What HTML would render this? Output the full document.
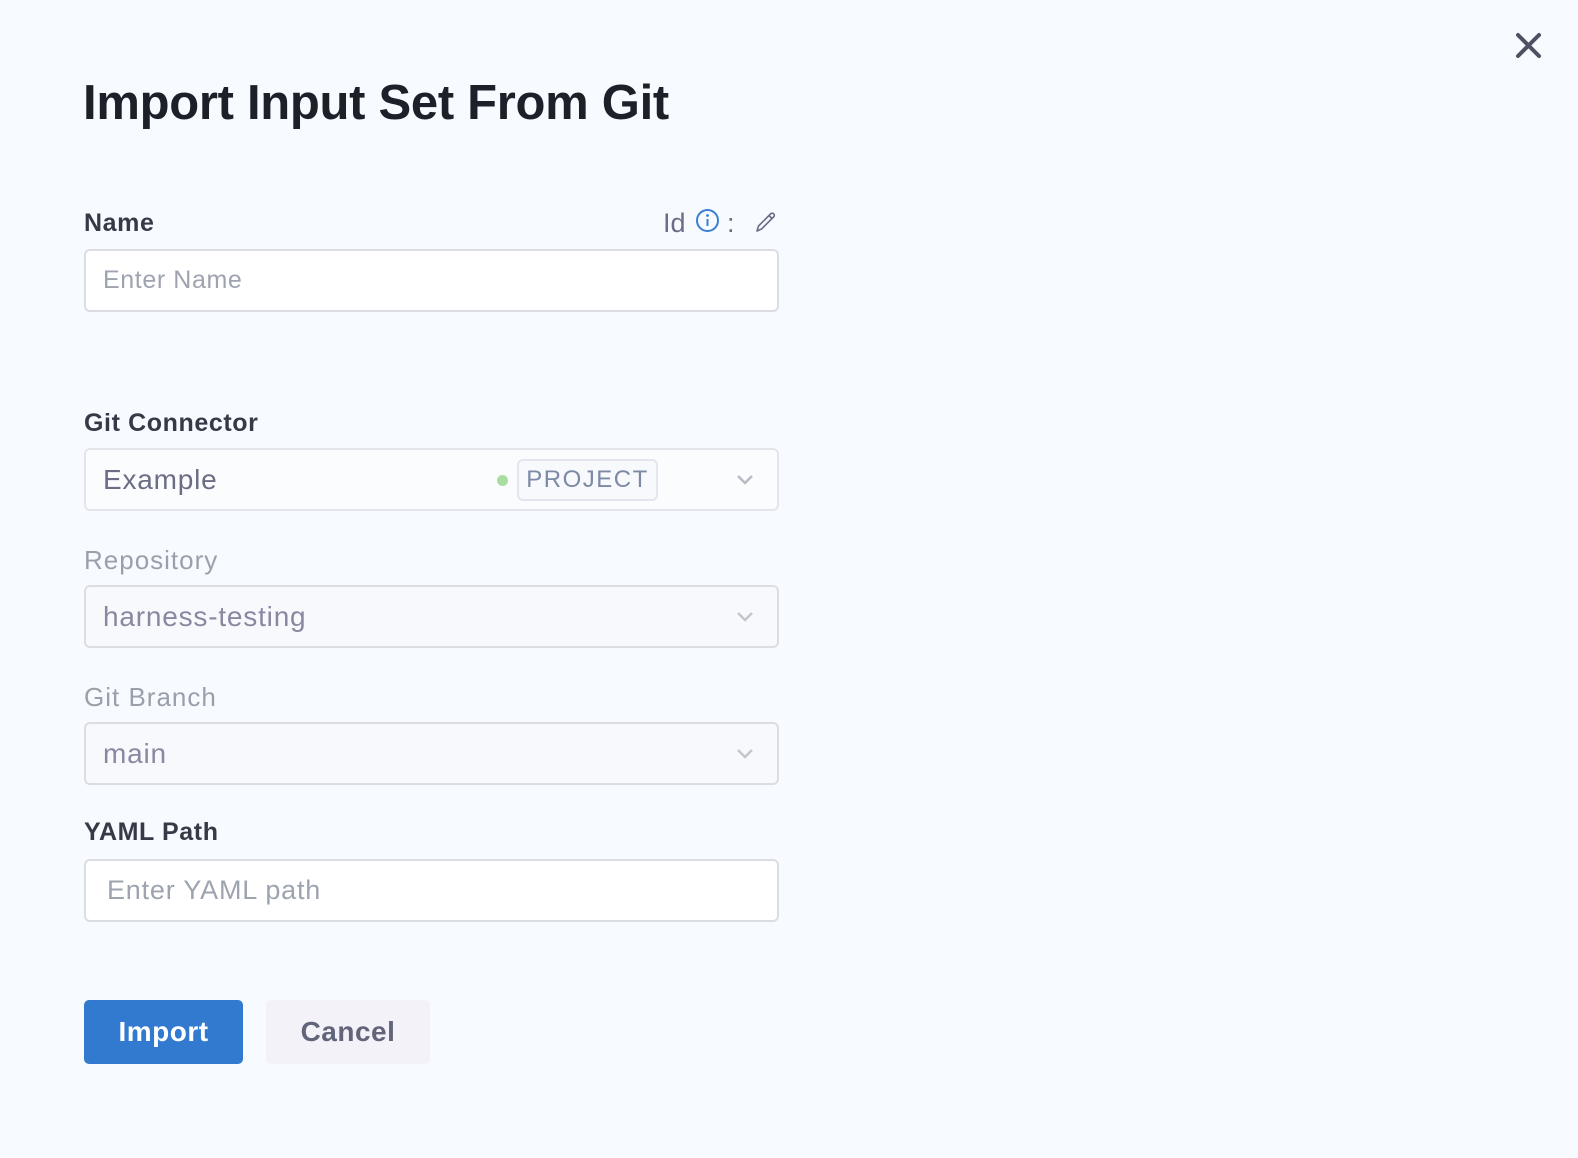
<!DOCTYPE html>
<html><head><style>
*{box-sizing:border-box;margin:0;padding:0}
body{width:1578px;height:1158px;background:#f7fbff;font-family:"Liberation Sans",sans-serif;position:relative;overflow:hidden}
.abs{position:absolute}
h1{position:absolute;left:83px;top:75px;font-size:49px;font-weight:bold;color:#1c2129;letter-spacing:-0.3px}
.lbl{position:absolute;left:84px;font-size:25px;color:#383946;font-weight:bold;letter-spacing:0.6px}
.lbl.dis{color:#9aa0ab;font-weight:normal;font-size:26px;letter-spacing:1px}
.inp{position:absolute;left:84px;width:695px;height:63px;border:2px solid #dcdde3;border-radius:6px;background:#fff;font-size:26px;padding-left:17px;line-height:59px;color:#9293ab}
.inp.dis{background:#f7f9fc;color:#8a88a0;letter-spacing:0.8px}
.chev{position:absolute;right:22px;top:22px}
</style></head><body>
<svg class="abs" style="left:1515px;top:32px" width="27" height="27" viewBox="0 0 27 27"><path d="M3 3L24 24M24 3L3 24" stroke="#4f5162" stroke-width="4" stroke-linecap="round"/></svg>
<h1>Import Input Set From Git</h1>
<div class="lbl" style="top:209px">Name</div>
<div class="abs" style="left:663px;top:208px;font-size:27px;color:#6b6d85">Id</div>
<svg class="abs" style="left:695px;top:208px" width="25" height="25" viewBox="0 0 25 25"><circle cx="12.5" cy="12.5" r="10.5" fill="none" stroke="#3a7fd5" stroke-width="2"/><circle cx="12.5" cy="7.5" r="1.4" fill="#3a7fd5"/><path d="M12.5 11v7" stroke="#3a7fd5" stroke-width="2"/></svg>
<div class="abs" style="left:727px;top:208px;font-size:27px;color:#6b6d85">:</div>
<svg class="abs" style="left:753px;top:209px" width="26" height="26" viewBox="0 0 26 26"><path d="M4 22l1.5-5L18 4.5a2.2 2.2 0 013 3L8.5 20z M16 6.5l3 3" fill="none" stroke="#6b6d85" stroke-width="1.6" stroke-linejoin="round"/></svg>
<div class="inp" style="top:249px;font-size:25px;color:#9ea3b0;letter-spacing:0.6px">Enter Name</div>

<div class="lbl" style="top:409px">Git Connector</div>
<div class="inp" style="top:448px;background:#fbfcfe;color:#6b6d85;font-size:28px;border-color:#e3e5ea;letter-spacing:0.8px">Example
<span class="abs" style="left:411px;top:25px;width:11px;height:11px;border-radius:50%;background:#a8dea0"></span>
<span class="abs" style="left:431px;top:9px;width:141px;height:42px;border:2px solid #e3e6ee;border-radius:6px;background:#f7f9fc;font-size:24px;line-height:38px;text-align:center;color:#7d8aa6;letter-spacing:1.5px">PROJECT</span>
<svg class="chev" width="20" height="14" viewBox="0 0 20 14"><path d="M3 4l7 7 7-7" fill="none" stroke="#b8bbc4" stroke-width="2.5"/></svg></div>

<div class="lbl dis" style="top:545px">Repository</div>
<div class="inp dis" style="top:585px;font-size:28px">harness-testing<svg class="chev" width="20" height="14" viewBox="0 0 20 14"><path d="M3 4l7 7 7-7" fill="none" stroke="#c4c6cd" stroke-width="2.5"/></svg></div>

<div class="lbl dis" style="top:682px">Git Branch</div>
<div class="inp dis" style="top:722px;font-size:28px">main<svg class="chev" width="20" height="14" viewBox="0 0 20 14"><path d="M3 4l7 7 7-7" fill="none" stroke="#c4c6cd" stroke-width="2.5"/></svg></div>

<div class="lbl" style="top:818px">YAML Path</div>
<div class="inp" style="top:859px;font-size:27px;padding-left:21px;color:#9ea3b0;letter-spacing:0.8px">Enter YAML path</div>

<div class="abs" style="left:84px;top:1000px;width:159px;height:64px;background:#3279d0;border-radius:5px;color:#fff;font-size:28px;font-weight:bold;text-align:center;line-height:64px;letter-spacing:0.5px">Import</div>
<div class="abs" style="left:266px;top:1000px;width:164px;height:64px;background:#f3f2f8;border-radius:5px;color:#62647a;font-size:28px;font-weight:bold;text-align:center;line-height:64px;letter-spacing:0.5px">Cancel</div>
</body></html>
